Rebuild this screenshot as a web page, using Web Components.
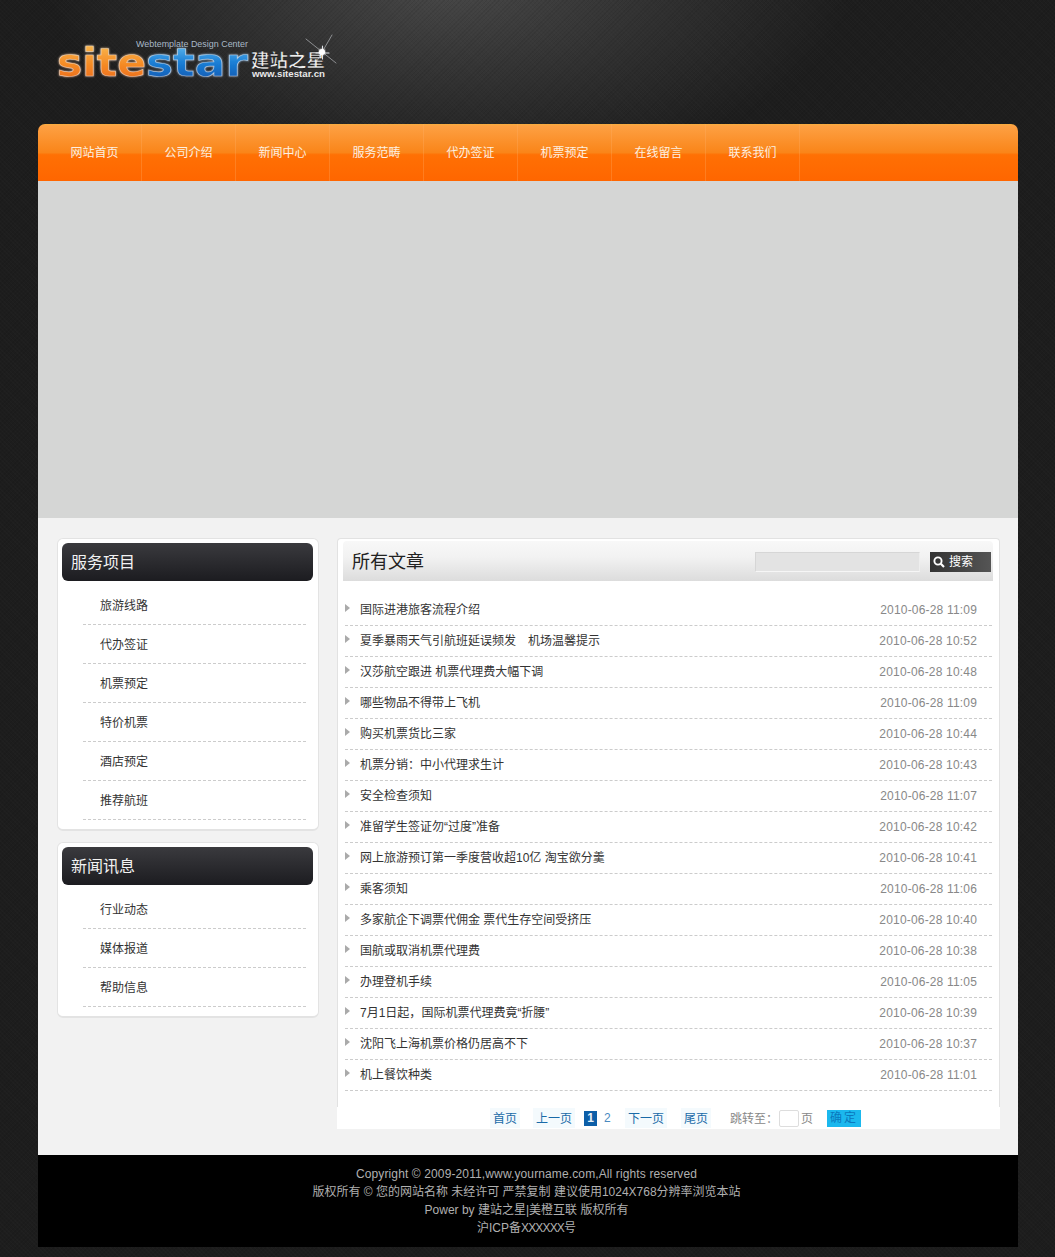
<!DOCTYPE html>
<html lang="zh"><head><meta charset="utf-8"><title>建站之星</title>
<style>
html,body{margin:0;padding:0}
body{font:12px/18px "Liberation Sans","Noto Sans CJK SC",sans-serif;color:#333;background-color:#1d1d1d;
background-image:repeating-linear-gradient(45deg,rgba(255,255,255,.012) 0 1px,transparent 1px 3px),repeating-linear-gradient(-45deg,rgba(0,0,0,.07) 0 1px,transparent 1px 3px),radial-gradient(ellipse 400px 190px at 450px -15px,#484848,rgba(60,60,60,.6) 55%,rgba(40,40,40,0) 100%);background-repeat:repeat,repeat,no-repeat}
</style></head><body>
<site-page></site-page>
<script>
const F='"Liberation Sans","Noto Sans CJK SC",sans-serif';
const TC=c=>`<span style="font-family:'Noto Sans CJK TC',sans-serif;line-height:0">${c}</span>`;
class SiteLogo extends HTMLElement{constructor(){super();this.attachShadow({mode:'open'}).innerHTML=`<style>:host{display:block;height:124px}svg{display:block}text{font-family:${F}}</style>
<svg width="340" height="124" viewBox="38 0 340 124">
<defs>
<linearGradient id="o" x1="0" y1="0" x2="0" y2="1"><stop offset="0" stop-color="#f9c25a"/><stop offset=".55" stop-color="#f58a24"/><stop offset="1" stop-color="#e8641a"/></linearGradient>
<linearGradient id="b" x1="0" y1="0" x2="0" y2="1"><stop offset="0" stop-color="#6ec6f2"/><stop offset=".5" stop-color="#1b7fd6"/><stop offset="1" stop-color="#0d4fa8"/></linearGradient>
<filter id="g" x="-10%" y="-30%" width="120%" height="160%"><feGaussianBlur stdDeviation="1.200" result="x"/><feMerge><feMergeNode in="x"/><feMergeNode in="SourceGraphic"/></feMerge></filter>
</defs>
<text x="136" y="47" font-size="9.5" fill="#a9b8c6" textLength="112" lengthAdjust="spacingAndGlyphs">Webtemplate Design Center</text>
<g filter="url(#g)" font-size="39" font-weight="700" stroke="#f2f2f2" stroke-opacity=".6" stroke-width=".7">
<text x="57" y="76" style="font-family:'DejaVu Sans',sans-serif" fill="url(#o)" textLength="89" lengthAdjust="spacingAndGlyphs">site</text>
<text x="146" y="76" style="font-family:'DejaVu Sans',sans-serif" fill="url(#b)" textLength="102" lengthAdjust="spacingAndGlyphs">star</text>
</g>
<text x="251" y="67" font-size="18.5" font-weight="700" fill="#eee" stroke="#111" stroke-width=".5" textLength="74" lengthAdjust="spacingAndGlyphs">建站之星</text>
<text x="252" y="76.500" font-size="9.500" font-weight="700" fill="#e8e8e8" textLength="73" lengthAdjust="spacingAndGlyphs">www.sitestar.cn</text>
<g stroke="#dfe3e8" stroke-linecap="round"><path d="M306 39L336 63" stroke-width=".8" opacity=".65"/><path d="M332 35L314 66" stroke-width=".8" opacity=".65"/><path d="M316 53h13M322.500 46v13" stroke-width="1.100"/></g>
<circle cx="322" cy="52" r="3" fill="#fff" filter="url(#g)"/>
</svg>`}}
class NavItem extends HTMLElement{constructor(){super();this.attachShadow({mode:'open'}).innerHTML=`<style>:host{display:block;width:93px;height:57px;line-height:59px;text-align:center;color:#fdf0e2;font-size:12px;border-right:1px solid rgba(255,180,110,.28)}</style><slot></slot>`}}
class NavBar extends HTMLElement{constructor(){super();this.attachShadow({mode:'open'}).innerHTML=`<style>:host{display:flex;height:57px;padding-left:10px;border-radius:7px 7px 0 0;background:linear-gradient(#f8ae3e 0,#fda043 2px,#fa8519 50%,#ff7004 54%,#ff6600 100%)}</style><slot></slot>`}}
class SideCard extends HTMLElement{constructor(){super();this.attachShadow({mode:'open'}).innerHTML=`<style>
:host{display:block;box-sizing:border-box;width:262px;background:#fff;border:1px solid #e3e3e3;border-bottom-width:2px;border-radius:6px;padding:4px 5px 9px 4px}
h3{margin:0 0 5px;height:38px;line-height:39px;padding-left:9px;font-size:16px;font-weight:400;color:#f2f2f2;border-radius:6px;background:linear-gradient(#3a3a3e,#1c1c20)}
</style><h3></h3><slot></slot>`;this.shadowRoot.querySelector('h3').textContent=this.getAttribute('heading')}}
class SideLink extends HTMLElement{constructor(){super();this.attachShadow({mode:'open'}).innerHTML=`<style>:host{display:block;box-sizing:border-box;height:39px;line-height:41px;margin:0 7px 0 21px;padding-left:17px;border-bottom:1px dashed #ccc;color:#333;font-size:12px}</style><slot></slot>`}}
class ArticleRow extends HTMLElement{constructor(){super();this.attachShadow({mode:'open'}).innerHTML=`<style>
:host{display:flex;box-sizing:border-box;height:31px;line-height:30px;border-bottom:1px dashed #ccc;padding:0 15px 0 15px;justify-content:space-between;position:relative;color:#333;font-size:12px;white-space:pre}
:host::before{content:"";position:absolute;left:0;top:9px;border-left:5px solid #aaa;border-top:4px solid transparent;border-bottom:4px solid transparent}
.d{color:#888;letter-spacing:.18px}
</style><span><slot></slot></span><span class="d"></span>`;this.shadowRoot.querySelector('.d').textContent=this.getAttribute('date')}}
class SearchBar extends HTMLElement{constructor(){super();this.attachShadow({mode:'open'}).innerHTML=`<style>
:host{display:flex;align-items:center;gap:10px}
i{display:block;width:165px;height:20px;box-sizing:border-box;background:#e3e3e3;border:1px solid #d6d6d6;border-bottom-color:#f6f6f6;border-right-color:#eee}
b{display:flex;align-items:center;width:61px;height:20px;background:linear-gradient(90deg,#333,#555);color:#fff;font-weight:400;font-size:12px;line-height:20px}
svg{margin:0 4px 0 3px}
</style><i></i><b><svg width="12" height="12" viewBox="0 0 12 12"><circle cx="5" cy="5" r="3.600" fill="none" stroke="#fff" stroke-width="1.900"/><path d="M7.800 7.800L11 11" stroke="#fff" stroke-width="2.200"/></svg>搜索</b>`}}
class PagerBar extends HTMLElement{constructor(){super();this.attachShadow({mode:'open'}).innerHTML=`<style>
:host{display:flex;align-items:center;height:22px;background:#fff;padding-left:156px;font-size:12px;color:#888;white-space:pre}
a{color:#1a6aa8;background:#f4fafd;padding:2px 3px 0;margin:0 -3px}
.g{padding-top:2px}
.c{width:13px;height:15px;line-height:15px;background:#0d5fa8;color:#e8f2fa;font-weight:700;text-align:center;margin-left:12px}
.n{color:#4a8abf;margin-left:7px;width:8px}
u{display:block;width:20px;height:17px;box-sizing:border-box;border:1px solid #ddd;border-radius:2px;margin:0 2px 0 1px;background:#fff}
s{text-decoration:none;display:block;width:34px;height:17px;line-height:17px;background:#1bb8ee;color:#0b78bd;text-align:center;margin-left:14px;letter-spacing:2px}
</style>
<a>首页</a><a style="margin-left:16px">上一页</a><span class="c">1</span><span class="n">2</span><a style="margin-left:13px">下一页</a><a style="margin-left:17px">尾页</a><span class="g" style="margin-left:22px">跳转至${TC('：')}</span><u></u><span class="g">页</span><s>确定</s>`}}
class ArticlePanel extends HTMLElement{constructor(){super();this.attachShadow({mode:'open'}).innerHTML=`<style>
:host{display:block;box-sizing:border-box;width:663px}
.box{background:#fff;border:1px solid #e2e2e2;border-bottom:0;border-radius:4px 4px 0 0;height:569px;box-sizing:border-box;padding:2px 6px 0 5px}
.t{display:flex;align-items:center;justify-content:space-between;height:40px;box-sizing:border-box;padding:2px 2px 0 9px;border-radius:4px 4px 0 0;background:linear-gradient(#f8f8f8,#f2f2f2 40%,#dcdcdc);font-size:18px;color:#222}
.l{padding:14px 1px 0 2px}
</style><div class="box"><div class="t"><span>所有文章</span><search-bar></search-bar></div><div class="l"><slot></slot></div></div><pager-bar></pager-bar>`}}
class SiteFooter extends HTMLElement{constructor(){super();this.attachShadow({mode:'open'}).innerHTML=`<style>:host{display:block;box-sizing:border-box;height:92px;background:#000;color:#b0b0b0;text-align:center;font-size:12px;line-height:18px;padding:10px 3px 0 0}</style><slot></slot>`}}
const S=[['服务项目',['旅游线路','代办签证','机票预定','特价机票','酒店预定','推荐航班']],['新闻讯息',['行业动态','媒体报道','帮助信息']]];
const A=[['国际进港旅客流程介绍','11:09'],['夏季暴雨天气引航班延误频发　机场温馨提示','10:52'],['汉莎航空跟进 机票代理费大幅下调','10:48'],['哪些物品不得带上飞机','11:09'],['购买机票货比三家','10:44'],['机票分销'+TC('：')+'中小代理求生计','10:43'],['安全检查须知','11:07'],['准留学生签证勿“过度”准备','10:42'],['网上旅游预订第一季度营收超10亿 淘宝欲分羹','10:41'],['乘客须知','11:06'],['多家航企下调票代佣金 票代生存空间受挤压','10:40'],['国航或取消机票代理费','10:38'],['办理登机手续','11:05'],['7月1日起'+TC('，')+'国际机票代理费竟“折腰”','10:39'],['沈阳飞上海机票价格仍居高不下','10:37'],['机上餐饮种类','11:01']];
const N=['网站首页','公司介绍','新闻中心','服务范畴','代办签证','机票预定','在线留言','联系我们'];
class SitePage extends HTMLElement{constructor(){super();this.attachShadow({mode:'open'}).innerHTML=`<style>
:host{display:block;width:980px;margin:0 0 10px 38px}
.banner{height:337px;background:#d5d6d5}
.main{display:flex;gap:18px;height:637px;box-sizing:border-box;background:#f2f2f2;padding:20px 0 0 19px}
.side{display:flex;flex-direction:column;gap:11px}
.w{letter-spacing:.12px}.x{letter-spacing:-.85px}
</style>
<site-logo></site-logo>
<nav-bar>${N.map(t=>`<nav-item>${t}</nav-item>`).join('')}</nav-bar>
<div class="banner"></div>
<div class="main"><div class="side">${S.map(([h,l])=>`<side-card heading="${h}">${l.map(t=>`<side-link>${t}</side-link>`).join('')}</side-card>`).join('')}</div>
<article-panel>${A.map(([t,d])=>`<article-row date="2010-06-28 ${d}">${t}</article-row>`).join('')}</article-panel></div>
<site-footer><div class="w">Copyright © 2009-2011,www.yourname.com,All rights reserved</div><div>版权所有 © 您的网站名称 未经许可 严禁复制 建议使用1024X768分辨率浏览本站</div><div>Power by 建站之星|美橙互联 版权所有</div><div>沪ICP备<span class="x">XXXXXX</span>号</div></site-footer>`}}
[['search-bar',SearchBar],['pager-bar',PagerBar],['site-logo',SiteLogo],['nav-item',NavItem],['nav-bar',NavBar],['side-card',SideCard],['side-link',SideLink],['article-row',ArticleRow],['article-panel',ArticlePanel],['site-footer',SiteFooter],['site-page',SitePage]].forEach(([n,c])=>customElements.define(n,c));
</script>
</body></html>
